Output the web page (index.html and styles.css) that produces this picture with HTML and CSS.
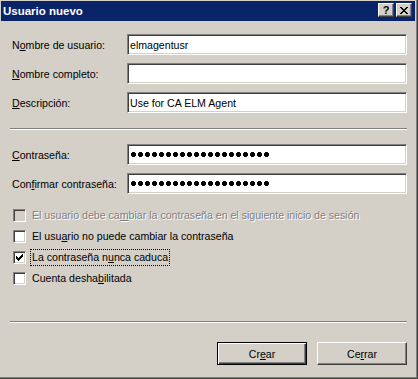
FILE: index.html
```html
<!DOCTYPE html>
<html>
<head>
    <title>Usuario nuevo</title>
    <link rel="stylesheet" href="styles.css">
</head>
<body>
    <div class="window">
        <div class="titlebar">
            <span class="title">Usuario nuevo</span>
            <div class="caption-buttons">
                <button type="button" class="caption-btn help-btn">?</button>
                <button type="button" class="caption-btn close-btn">
                    <svg width="8" height="7" viewBox="0 0 8 7" shape-rendering="crispEdges">
                        <path d="M0 0h2v1h-2z M6 0h2v1h-2z M1 1h2v1h-2z M5 1h2v1h-2z M2 2h4v1h-4z M3 3h2v1h-2z M2 4h4v1h-4z M1 5h2v1h-2z M5 5h2v1h-2z M0 6h2v1h-2z M6 6h2v1h-2z" fill="#000"/>
                    </svg>
                </button>
            </div>
        </div>

        <form class="dialog">
            <div class="fields">
                <label class="field-label" for="username">N<u>o</u>mbre de usuario:</label>
                <input type="text" id="username" class="edit" value="elmagentusr">

                <label class="field-label" for="fullname"><u>N</u>ombre completo:</label>
                <input type="text" id="fullname" class="edit" value="">

                <label class="field-label" for="description"><u>D</u>escripción:</label>
                <input type="text" id="description" class="edit" value="Use for CA ELM Agent">
            </div>

            <div class="separator"></div>

            <div class="fields">
                <label class="field-label"><u>C</u>ontraseña:</label>
                <div class="edit"><span class="dots"></span></div>

                <label class="field-label">Con<u>f</u>irmar contraseña:</label>
                <div class="edit"><span class="dots"></span></div>
            </div>

            <div class="checks">
                <div class="check disabled">
                    <span class="box"></span>
                    <span class="check-text">El usuario debe ca<u>m</u>biar la contraseña en el siguiente inicio de sesión</span>
                </div>
                <div class="check">
                    <span class="box"></span>
                    <span class="check-text">El usu<u>a</u>rio no puede cambiar la contraseña</span>
                </div>
                <div class="check">
                    <span class="box">
                        <svg width="9" height="9" viewBox="0 0 9 9" shape-rendering="crispEdges">
                            <path d="M1 3h1v3h-1z M2 4h1v3h-1z M3 5h1v3h-1z M4 4h1v3h-1z M5 3h1v3h-1z M6 2h1v3h-1z M7 1h1v3h-1z" fill="#000"/>
                        </svg>
                    </span>
                    <span class="check-text focused">La contraseña n<u>u</u>nca caduca</span>
                </div>
                <div class="check">
                    <span class="box"></span>
                    <span class="check-text">Cuenta desha<u>b</u>ilitada</span>
                </div>
            </div>

            <div class="separator bottom-sep"></div>

            <div class="actions">
                <button type="button" class="push default">Cr<u>e</u>ar</button>
                <button type="button" class="push">Ce<u>r</u>rar</button>
            </div>
        </form>
    </div>
</body>
</html>
```

FILE: styles.css
```css
body {
    margin: 0;
    background-color: #d4d0c8;
}
.window {
    width: 418px;
    height: 379px;
    box-sizing: border-box;
    padding: 1px 0 0 1px;
    background-color: #d4d0c8;
    border-right: 1px solid #404040;
    border-bottom: 1px solid #404040;
    box-shadow: inset -1px -1px #808080;
    font-family: "Liberation Sans", Arial, sans-serif;
    font-size: 10.6px;
    color: #000;
}
.titlebar {
    width: 414px;
    height: 20px;
    box-sizing: border-box;
    padding: 0 3px 0 2px;
    background-color: #0a246a;
    display: flex;
    justify-content: space-between;
    align-items: flex-start;
}
.title {
    color: #fff;
    font-weight: bold;
    font-size: 11.5px;
    line-height: 20px;
}
.caption-buttons {
    display: flex;
    gap: 2px;
    margin-top: 2px;
}
.caption-btn {
    width: 16px;
    height: 14px;
    padding: 0;
    box-sizing: border-box;
    background-color: #d4d0c8;
    border: 1px solid;
    border-color: #fff #404040 #404040 #fff;
    box-shadow: inset -1px -1px #808080;
    display: flex;
    align-items: center;
    justify-content: center;
    font-family: "Liberation Sans", Arial, sans-serif;
    font-weight: bold;
    font-size: 11px;
    line-height: 12px;
    color: #000;
}
.dialog {
    padding: 13px 10px 0 9px;
    margin: 0;
}
.fields {
    display: grid;
    grid-template-columns: 117px 280px;
    row-gap: 8px;
    align-items: center;
}
.field-label {
    padding-left: 2px;
    white-space: nowrap;
}
.edit {
    height: 21px;
    box-sizing: border-box;
    margin: 0;
    padding: 0 2px;
    border: 1px solid;
    border-color: #808080 #fff #fff #808080;
    box-shadow: inset 1px 1px #404040, inset -1px -1px #d4d0c8;
    background-color: #fff;
    font-family: "Liberation Sans", Arial, sans-serif;
    font-size: 10.6px;
    color: #000;
    outline: none;
    display: flex;
    align-items: center;
}
.dots {
    display: block;
    width: 140px;
    height: 5px;
    margin-left: 1px;
    background-image: radial-gradient(circle at 2.5px 2.5px, #000 2.2px, transparent 2.8px);
    background-size: 7px 5px;
    background-repeat: repeat-x;
}
.separator {
    border-top: 1px solid #808080;
    border-bottom: 1px solid #fff;
    margin: 15px 0 14px;
}
.checks {
    margin-top: 11px;
}
.check {
    height: 21px;
    padding-left: 3px;
    display: flex;
    align-items: center;
    white-space: nowrap;
}
.box {
    width: 13px;
    height: 13px;
    box-sizing: border-box;
    border: 1px solid;
    border-color: #808080 #fff #fff #808080;
    box-shadow: inset 1px 1px #404040, inset -1px -1px #d4d0c8;
    background-color: #fff;
    display: flex;
    align-items: center;
    justify-content: center;
}
.box svg {
    display: block;
}
.check-text {
    margin-left: 4px;
    padding: 1px;
    border: 1px dotted transparent;
    line-height: 13px;
}
.check-text.focused {
    border-color: #000;
}
.check.disabled .box {
    background-color: #d4d0c8;
}
.check.disabled .check-text {
    color: #808080;
    text-shadow: 1px 1px #fff;
}
.bottom-sep {
    margin: 32px 0 19px;
}
.actions {
    display: flex;
    justify-content: flex-end;
    gap: 10px;
}
.push {
    width: 90px;
    height: 23px;
    padding: 0;
    box-sizing: border-box;
    background-color: #d4d0c8;
    border: 1px solid;
    border-color: #fff #404040 #404040 #fff;
    box-shadow: inset -1px -1px #808080;
    font-family: "Liberation Sans", Arial, sans-serif;
    font-size: 10.6px;
    color: #000;
}
.push.default {
    border: 1px solid #000;
    box-shadow: inset 1px 1px #fff, inset -1px -1px #404040, inset -2px -2px #808080;
}
```
